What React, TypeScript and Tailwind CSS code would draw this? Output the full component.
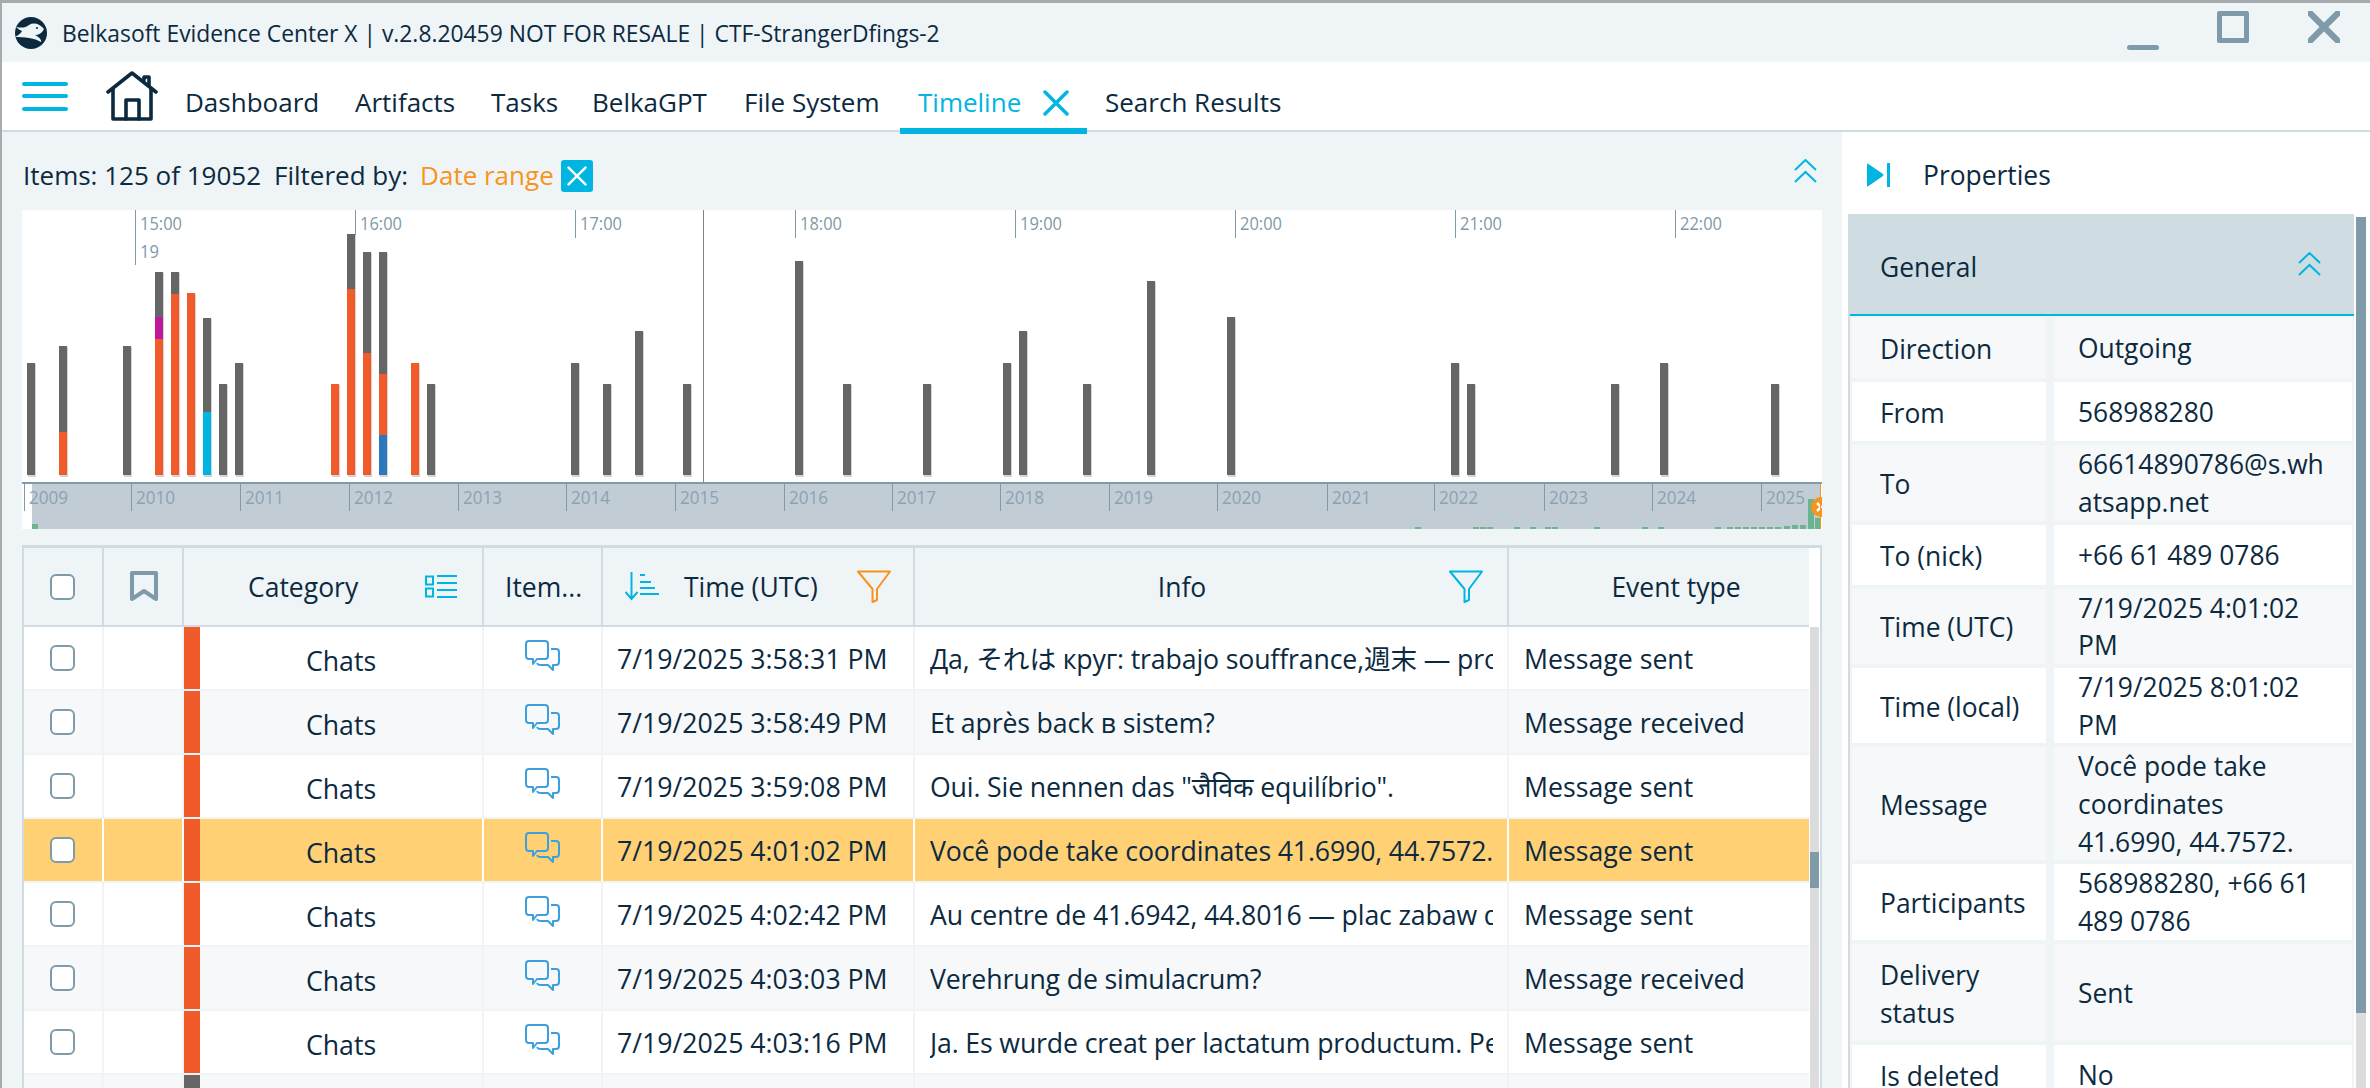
import React from "react";

const DARK = "#0c2a3f";

type Seg = [number, string];
const G = "#666666", O = "#f15a29", P = "#bd1a9b", C = "#00b5e2", B = "#2b78bd";
const bars: [number, Seg[]][] = [
  [27, [[363, G]]],
  [59, [[346, G], [432, O]]],
  [123, [[346, G]]],
  [155, [[272, G], [317, P], [339, O]]],
  [171, [[272, G], [294, O]]],
  [187, [[293, O]]],
  [203, [[318, G], [412, C]]],
  [219, [[384, G]]],
  [235, [[363, G]]],
  [331, [[384, O]]],
  [347, [[234, G], [289, O]]],
  [363, [[252, G], [353, O]]],
  [379, [[252, G], [374, O], [435, B]]],
  [411, [[363, O]]],
  [427, [[384, G]]],
  [571, [[363, G]]],
  [603, [[384, G]]],
  [635, [[331, G]]],
  [683, [[384, G]]],
  [795, [[261, G]]],
  [843, [[384, G]]],
  [923, [[384, G]]],
  [1003, [[363, G]]],
  [1019, [[331, G]]],
  [1083, [[384, G]]],
  [1147, [[281, G]]],
  [1227, [[317, G]]],
  [1451, [[363, G]]],
  [1467, [[384, G]]],
  [1611, [[384, G]]],
  [1660, [[363, G]]],
  [1771, [[384, G]]],
];
const BOTTOM = 475;
const hours: [number, string][] = [
  [135, "15:00"], [355, "16:00"], [575, "17:00"], [795, "18:00"], [1015, "19:00"], [1235, "20:00"], [1455, "21:00"], [1675, "22:00"],
];
const years: [number, string][] = [
  [24, "2009"], [131, "2010"], [240, "2011"], [349, "2012"], [458, "2013"], [566, "2014"], [675, "2015"], [784, "2016"],
  [892, "2017"], [1000, "2018"], [1109, "2019"], [1217, "2020"], [1327, "2021"], [1434, "2022"], [1544, "2023"], [1652, "2024"], [1761, "2025"],
];
const ticks: [number, number][] = [
  [1415, 2], [1473, 2], [1480, 2], [1487, 2], [1514, 2], [1530, 2], [1545, 2], [1552, 2], [1594, 2], [1642, 2], [1658, 2],
  [1715, 2], [1727, 2], [1735, 2], [1743, 2], [1751, 2], [1759, 2], [1767, 2], [1775, 2], [1784, 3], [1792, 4], [1800, 4],
];

function Chart() {
  return (
    <svg width={1800} height={319} viewBox="22 210 1800 319" className="block bg-white">
      {hours.map(([x, t], i) => (
        <g key={t}>
          <line x1={x + 0.5} x2={x + 0.5} y1={210} y2={i === 0 ? 265 : 238} stroke="#7f9aa8" strokeWidth={1} />
          <text x={x + 5} y={230} fontSize={18} fill="#7f9aa8" textLength={42} lengthAdjust="spacingAndGlyphs">{t}</text>
        </g>
      ))}
      <text x={140} y={258} fontSize={18} fill="#7f9aa8" textLength={19} lengthAdjust="spacingAndGlyphs">19</text>
      <rect x={703} y={210} width={1} height={272} fill="#8a8078" />
      {bars.map(([x, segs]) => (
        <g key={x}>
          <rect x={x + 1} y={segs[0][0] + 1} width={8} height={BOTTOM - segs[0][0] + 1} fill="#d4d4d4" />
          {segs.map(([y, c], i) => (
            <rect key={y} x={x} y={y} width={8} height={(i + 1 < segs.length ? segs[i + 1][0] : BOTTOM) - y} fill={c} />
          ))}
        </g>
      ))}
      <rect x={32} y={484} width={1788} height={45} fill="#c2ccd5" />
      <rect x={22} y={482} width={1800} height={2} fill="#7f9aa8" />
      {years.map(([x, t]) => (
        <g key={t}>
          <line x1={x + 0.5} x2={x + 0.5} y1={484} y2={511} stroke="#7f9aa8" strokeWidth={1} />
          <text x={x + 5} y={504} fontSize={19} fill="#8aa3b1" textLength={39} lengthAdjust="spacingAndGlyphs">{t}</text>
        </g>
      ))}
      <rect x={32} y={524} width={6} height={5} fill="#6cb38f" />
      {ticks.map(([x, h]) => (
        <rect key={x} x={x} y={529 - h} width={6} height={h} fill="#6cb38f" />
      ))}
      <rect x={1808} y={499} width={6} height={30} fill="#6cb38f" />
      <rect x={1815} y={518} width={5} height={11} fill="#6cb38f" />
      <circle cx={1821} cy={507} r={10} fill="#f7941d" />
      <path d="M1817 503 L1821 507 L1817 511" stroke="#fff" strokeWidth={2.5} fill="none" />
      <rect x={1820} y={484} width={1} height={45} fill="#f7941d" />
    </svg>
  );
}

function Logo() {
  return (
    <svg width={32} height={32} viewBox="0 0 32 32">
      <circle cx={16} cy={16} r={16} fill={DARK} />
      <path d="M1 10 C7 11 10 11 14 8 C19 5 25 7 29 12 C27 16 24 18 20 18 C24 20 27 23 26 25 C20 21 9 20 0 20 C4 18 6 16 7 14 C5 13 3 12 1 10 Z" fill="#eff4f7" />
      <circle cx={22} cy={11} r={1} fill={DARK} />
    </svg>
  );
}
function House() {
  return (
    <svg width={52} height={50} viewBox="0 0 52 50" fill="none" stroke={DARK} strokeWidth={3.6} strokeLinejoin="round" strokeLinecap="round">
      <path d="M2 21 L26 2 L50 21" />
      <path d="M7 18 V48 H45 V18" />
      <path d="M20 48 V29 H33 V48" />
      <path d="M38 9 V6 H43 V14" />
    </svg>
  );
}
function Chevrons() {
  return (
    <svg width={23} height={24} viewBox="0 0 23 24" fill="none" stroke="#00b5e2" strokeWidth={2}>
      <path d="M1 11 L11.5 1 L22 11" />
      <path d="M1 23 L11.5 13 L22 23" />
    </svg>
  );
}
function XMark({ size, w, color }: { size: number; w: number; color: string }) {
  return (
    <svg width={size} height={size} viewBox="0 0 26 26" fill="none" stroke={color} strokeWidth={w} strokeLinecap="round">
      <path d="M2 2 L24 24 M24 2 L2 24" />
    </svg>
  );
}
function Comment() {
  return (
    <svg width={35} height={32} viewBox="0 0 35 32" fill="none" stroke="#3e9fdd" strokeWidth={2} strokeLinejoin="round">
      <path d="M4 1 H20 a3 3 0 0 1 3 3 V16 a3 3 0 0 1 -3 3 H12 L8 24 V19 H4 a3 3 0 0 1 -3 -3 V4 a3 3 0 0 1 3 -3 Z" />
      <path d="M26 9 H31 a3 3 0 0 1 3 3 V22 a3 3 0 0 1 -3 3 H28 V30 L23 25 H15 a3 3 0 0 1 -3 -2" />
    </svg>
  );
}
function Funnel({ color }: { color: string }) {
  return (
    <svg width={34} height={33} viewBox="0 0 34 33" fill="none" stroke={color} strokeWidth={2} strokeLinejoin="round">
      <path d="M1 1.5 H33 L20 19 V30 L15.5 32 V19 Z" />
    </svg>
  );
}
function SortIcon() {
  return (
    <svg width={35} height={29} viewBox="0 0 35 29" fill="none" stroke="#00b5e2" strokeWidth={2}>
      <path d="M6.5 0 V27 M0.5 20 L6.5 27 L12.5 20" />
      <path d="M15 3 H20 M15 10 H26 M15 16 H30 M15 22 H34" />
    </svg>
  );
}
function ListIcon() {
  return (
    <svg width={32} height={23} viewBox="0 0 32 23" fill="none" stroke="#00b5e2" strokeWidth={2}>
      <rect x={1} y={1.5} width={7} height={8} />
      <rect x={1} y={13.5} width={7} height={8} />
      <path d="M12 1 H32 M12 8 H32 M12 15 H32 M12 22 H32" />
    </svg>
  );
}
function Bookmark() {
  return (
    <svg width={28} height={32} viewBox="0 0 28 32" fill="none" stroke="#7f9aa8" strokeWidth={4} strokeLinejoin="round">
      <path d="M2 2 H26 V28 L14 20 L2 28 Z" />
    </svg>
  );
}
function PropIcon() {
  return (
    <svg width={23} height={24} viewBox="0 0 23 24" fill="#00b5e2">
      <path d="M0 1.5 Q0 0 1.5 1 L16 11 Q17 12 16 13 L1.5 23 Q0 24 0 22.5 Z" />
      <rect x={20} y={0} width={3} height={24} />
    </svg>
  );
}
function Check() {
  return <div className="w-[25px] h-[26px] rounded-[6px] border-2 border-[#7f9aa8] bg-white" />;
}

const rows: { time: string; info: string; ev: string; sel?: boolean }[] = [
  { time: "7/19/2025 3:58:31 PM", info: "Да, それは круг: trabajo souffrance,週末 — progresso y", ev: "Message sent" },
  { time: "7/19/2025 3:58:49 PM", info: "Et après back в sistem?", ev: "Message received" },
  { time: "7/19/2025 3:59:08 PM", info: 'Oui. Sie nennen das "जैविक equilíbrio".', ev: "Message sent" },
  { time: "7/19/2025 4:01:02 PM", info: "Você pode take coordinates 41.6990, 44.7572.", ev: "Message sent", sel: true },
  { time: "7/19/2025 4:02:42 PM", info: "Au centre de 41.6942, 44.8016 — plac zabaw dla dzieci", ev: "Message sent" },
  { time: "7/19/2025 4:03:03 PM", info: "Verehrung de simulacrum?", ev: "Message received" },
  { time: "7/19/2025 4:03:16 PM", info: "Ja. Es wurde creat per lactatum productum. Per aspera", ev: "Message sent" },
];

const props: [string, string, string][] = [
  ["Direction", "Outgoing", "bg-[#f6f8f9]"],
  ["From", "568988280", "bg-white"],
  ["To", "66614890786@s.whatsapp.net", "bg-[#f6f8f9]"],
  ["To (nick)", "+66 61 489 0786", "bg-white"],
  ["Time (UTC)", "7/19/2025 4:01:02 PM", "bg-[#f6f8f9]"],
  ["Time (local)", "7/19/2025 8:01:02 PM", "bg-white"],
  ["Message", "Você pode take coordinates 41.6990, 44.7572.", "bg-[#f6f8f9]"],
  ["Participants", "568988280, +66 61 489 0786", "bg-white"],
  ["Delivery status", "Sent", "bg-[#f6f8f9]"],
  ["Is deleted", "No", "bg-white"],
];

const GRID = "grid grid-cols-[80px_80px_300px_119px_312px_594px_300px]";

export default function App() {
  return (
    <div
      className="w-[2370px] h-[1088px] overflow-hidden border-l-2 border-[#a8abad] flex flex-col text-[26.4px] leading-[37.5px] text-[#0c2a3f]"
      style={{ fontFamily: '"Open Sans", "Noto Sans CJK JP", "Noto Sans", sans-serif' }}
    >
      {/* Title bar */}
      <div className="h-[62px] shrink-0 border-t-[3px] border-[#a8abad] bg-[#eff4f7] flex items-center pl-[13px]">
        <Logo />
        <div className="ml-[15px] text-[22.85px] flex-1 pt-[2px]">Belkasoft Evidence Center X | v.2.8.20459 NOT FOR RESALE | CTF-StrangerDfings-2</div>
        <div className="w-[32px] h-[5px] rounded-full bg-[#7f9aa8] mt-[29px]" />
        <div className="w-[32px] h-[32px] ml-[58px] border-[5px] rounded-[2px] border-[#7f9aa8] mb-[12px]" />
        <div className="ml-[59px] mr-[30px] mb-[12px]">
          <XMark size={32} w={5} color="#7f9aa8" />
        </div>
      </div>
      {/* Nav */}
      <div className="h-[70px] shrink-0 bg-white border-b-2 border-[#d0dce2] flex items-center text-[26px]">
        <div className="ml-[20px] w-[46px] flex flex-col gap-[8.5px]">
          <div className="h-[4px] rounded-full bg-[#00b5e2]" />
          <div className="h-[4px] rounded-full bg-[#00b5e2]" />
          <div className="h-[4px] rounded-full bg-[#00b5e2]" />
        </div>
        <div className="ml-[38px] mr-[27px]">
          <House />
        </div>
        <div className="w-[170px] shrink-0 pt-[13px]">Dashboard</div>
        <div className="w-[136px] shrink-0 pt-[13px]">Artifacts</div>
        <div className="w-[101px] shrink-0 pt-[13px]">Tasks</div>
        <div className="w-[152px] shrink-0 pt-[13px]">BelkaGPT</div>
        <div className="w-[156px] shrink-0 pt-[13px]">File System</div>
        <div className="relative w-[187px] shrink-0 pl-[18px] h-full flex items-center justify-between pr-[18px] text-[#00b5e2]">
          <span className="pt-[13px]">Timeline</span>
          <span className="pt-[14px]"><XMark size={26} w={3.5} color="#00b5e2" /></span>
          <div className="absolute left-0 right-0 bottom-[-4px] h-[6px] bg-[#00b5e2]" />
        </div>
        <div className="pl-[18px] pt-[13px]">Search Results</div>
      </div>
      {/* Body */}
      <div className="flex-1 flex min-h-0">
        {/* Left */}
        <div className="w-[1840px] shrink-0 bg-[#eff4f7] flex flex-col min-h-0">
          <div className="h-[78px] shrink-0 flex items-center pl-[21px] pr-[25px] text-[26px]">
            <span className="pt-[10px]">Items: 125 of 19052</span>
            <span className="ml-[13px] pt-[10px]">Filtered by:</span>
            <span className="ml-[12px] pt-[10px] text-[#f7941d]">Date range</span>
            <div className="ml-[7px] mt-[10px] w-[32px] h-[32px] rounded-[3px] bg-[#00b5e2] flex items-center justify-center">
              <XMark size={20} w={3.2} color="#ffffff" />
            </div>
            <div className="ml-auto">
              <Chevrons />
            </div>
          </div>
          <div className="ml-[20px] shrink-0">
            <Chart />
          </div>
          <div className="ml-[20px] mt-[16px] w-[1800px] flex-1 min-h-0 border-x-2 border-t-[3px] border-[#d0dce2] flex bg-white text-[26.7px]">
            <div className="w-[1785px] shrink-0 flex flex-col">
              <div className={`${GRID} h-[79px] shrink-0 bg-[#eff4f7] border-b-2 border-[#d0dce2] text-[26.5px]`}>
                <div className="border-r-2 border-[#d0dce2] flex items-center pl-[26px]"><Check /></div>
                <div className="border-r-2 border-[#d0dce2] flex items-center pl-[26px]"><Bookmark /></div>
                <div className="border-r-2 border-[#d0dce2] flex items-center pl-[64px] pr-[25px] justify-between">
                  <span className="pt-[2px]">Category</span>
                  <ListIcon />
                </div>
                <div className="border-r-2 border-[#d0dce2] flex items-center pl-[21px]"><span className="pt-[2px]">Item...</span></div>
                <div className="border-r-2 border-[#d0dce2] flex items-center pl-[22px] pr-[22px]">
                  <SortIcon />
                  <span className="ml-[24px] pt-[2px] flex-1">Time (UTC)</span>
                  <Funnel color="#f7941d" />
                </div>
                <div className="border-r-2 border-[#d0dce2] flex items-center pr-[24px]">
                  <span className="flex-1 text-center pt-[2px]">Info</span>
                  <Funnel color="#00b5e2" />
                </div>
                <div className="flex items-center justify-center pl-[34px]"><span className="pt-[2px]">Event type</span></div>
              </div>
              <div className="flex flex-col gap-[2px] bg-[#eff4f7] flex-1">
                {rows.map((r, i) => {
                  const bg = r.sel ? "bg-[#ffd074]" : i % 2 ? "bg-[#f6f8f9]" : "bg-white";
                  const br = r.sel ? "border-r-2 border-white" : "border-r-2 border-[#f0f4f6]";
                  return (
                    <div key={i} className={`${GRID} h-[62px] shrink-0 ${bg}`}>
                      <div className={`${br} flex items-center pl-[26px]`}><Check /></div>
                      <div className={br} />
                      <div className={`${br} flex items-stretch`}>
                        <div className="w-[16px] bg-[#f15a29]" />
                        <div className="flex-1 flex items-center justify-center pt-[5px]">Chats</div>
                      </div>
                      <div className={`${br} flex items-center justify-center pb-[4px]`}><Comment /></div>
                      <div className={`${br} flex items-center pl-[14px] pt-[1px]`}>{r.time}</div>
                      <div className={`${br} flex items-center pl-[15px] pr-[14px] pt-[1px] overflow-hidden`}>
                        <span className="whitespace-nowrap overflow-hidden tracking-[-0.15px]">{r.info}</span>
                      </div>
                      <div className="flex items-center pl-[15px] pt-[1px]">{r.ev}</div>
                    </div>
                  );
                })}
                <div className={`${GRID} h-[62px] shrink-0 bg-[#f6f8f9]`}>
                  <div className="border-r-2 border-[#f0f4f6]" />
                  <div className="border-r-2 border-[#f0f4f6]" />
                  <div className="border-r-2 border-[#f0f4f6]"><div className="w-[16px] h-full bg-[#666666]" /></div>
                  <div className="border-r-2 border-[#f0f4f6]" />
                  <div className="border-r-2 border-[#f0f4f6]" />
                  <div className="border-r-2 border-[#f0f4f6]" />
                  <div />
                </div>
              </div>
            </div>
            <div className="ml-px mt-[79px] w-[9px] bg-[#dcdcdc] flex flex-col">
              <div className="mt-[225px] h-[36px] bg-[#7f9aa8]" />
            </div>
          </div>
        </div>
        {/* Right */}
        <div className="flex-1 bg-white flex flex-col min-h-0 pl-[6px]">
          <div className="h-[82px] shrink-0 flex items-center pl-[19px]">
            <span className="pt-[4px]"><PropIcon /></span>
            <span className="ml-[33px] pt-[5px]">Properties</span>
          </div>
          <div className="flex-1 min-h-0 flex">
            <div className="w-[506px] shrink-0 border-l-2 border-[#d0dce2] flex flex-col">
              <div className="h-[102px] shrink-0 bg-[#cfdce1] border-b-[2px] border-[#00b5e2] flex items-center justify-between pl-[30px] pr-[33px]">
                <span className="pt-[8px]">General</span>
                <Chevrons />
              </div>
              <div className="flex-1 pt-[2px] pl-[2px] flex flex-col gap-[4px] bg-[#eff4f7] leading-[37.7px]">
                {props.map(([k, v, bg]) => (
                  <div key={k} className="flex gap-[8px] items-stretch shrink-0">
                    <div className={`w-[194px] shrink-0 ${bg} pl-[28px] pr-[4px] py-[10px] flex items-center`}>
                      <span className="pt-[2px] translate-y-[1px]">{k}</span>
                    </div>
                    <div className={`w-[298px] shrink-0 ${bg} pl-[24px] pr-[24px] flex items-center`}>
                      <span className="min-w-0 translate-y-[1px] [overflow-wrap:break-word]">{v}</span>
                    </div>
                  </div>
                ))}
              </div>
            </div>
            <div className="ml-[2px] mt-[3px] w-[10px] bg-[#dcdcdc]">
              <div className="h-[796px] bg-[#7f9aa8]" />
            </div>
          </div>
        </div>
      </div>
    </div>
  );
}
